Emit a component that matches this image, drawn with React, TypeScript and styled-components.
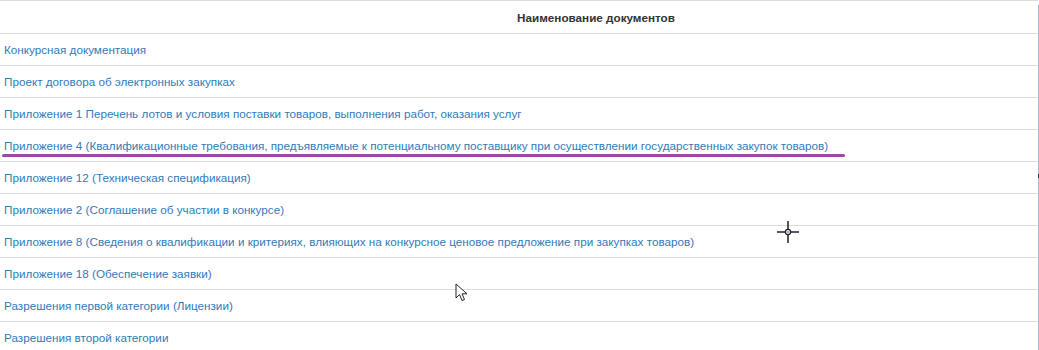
import React from "react";
import styled, { createGlobalStyle } from "styled-components";

const GlobalStyle = createGlobalStyle`
  html, body {
    margin: 0;
    padding: 0;
    background: #ffffff;
    font-family: "Liberation Sans", Arial, sans-serif;
  }
`;

const Page = styled.div`
  width: 1039px;
  height: 350px;
  display: flex;
  position: relative;
  overflow: hidden;
  background: #ffffff;
`;

const Table = styled.div`
  flex: 1;
  display: flex;
  flex-direction: column;
`;

const HeaderRow = styled.div`
  flex-shrink: 0;
  height: 32px;
  border-top: 1px solid #dddddd;
  display: flex;
  align-items: center;
  justify-content: center;
  padding-left: 154px;
  font-size: 11.7px;
  font-weight: 700;
  color: #333333;
`;

const Row = styled.div`
  flex-shrink: 0;
  height: 31px;
  border-top: 1px solid #dddddd;
  display: flex;
  align-items: center;
  padding-left: 4px;
`;

const DocLink = styled.a<{ $marked?: boolean }>`
  position: relative;
  font-size: 11.7px;
  color: #337ab7;
  text-decoration: none;
  cursor: pointer;
  white-space: nowrap;

  ${(p) =>
    p.$marked &&
    `
    &::after {
      content: "";
      position: absolute;
      left: -2px;
      right: -17px;
      bottom: -5px;
      height: 3px;
      border-radius: 2px;
      background: #9c4aa4;
    }
  `}
`;

const ScrollEdge = styled.div`
  width: 1px;
  margin-top: 5px;
  background: #aab9ca;
  position: relative;

  &::after {
    content: "";
    position: absolute;
    top: 169px;
    left: 0;
    width: 1px;
    height: 4px;
    background: #444444;
  }
`;

const Cursor = styled.svg<{ $x: number; $y: number }>`
  position: absolute;
  left: ${(p) => p.$x}px;
  top: ${(p) => p.$y}px;
  pointer-events: none;
`;

const documents = [
  "Конкурсная документация",
  "Проект договора об электронных закупках",
  "Приложение 1 Перечень лотов и условия поставки товаров, выполнения работ, оказания услуг",
  "Приложение 4 (Квалификационные требования, предъявляемые к потенциальному поставщику при осуществлении государственных закупок товаров)",
  "Приложение 12 (Техническая спецификация)",
  "Приложение 2 (Соглашение об участии в конкурсе)",
  "Приложение 8 (Сведения о квалификации и критериях, влияющих на конкурсное ценовое предложение при закупках товаров)",
  "Приложение 18 (Обеспечение заявки)",
  "Разрешения первой категории (Лицензии)",
  "Разрешения второй категории",
];

export default function App() {
  return (
    <>
      <GlobalStyle />
      <Page>
        <Table>
          <HeaderRow>Наименование документов</HeaderRow>
          {documents.map((doc, i) => (
            <Row key={i}>
              <DocLink $marked={i === 3}>{doc}</DocLink>
            </Row>
          ))}
        </Table>
        <ScrollEdge />

        <Cursor $x={776} $y={220} width="24" height="24" viewBox="0 0 24 24">
          <path d="M12 1v8M12 15v8M1 12h8M15 12h8" stroke="#1f1f2a" strokeWidth="1.5" />
          <circle cx="12" cy="12" r="2.6" fill="none" stroke="#1f1f2a" strokeWidth="1.2" />
          <circle cx="12" cy="12" r="0.7" fill="#1f1f2a" />
        </Cursor>

        <Cursor $x={455} $y={283} width="14" height="20" viewBox="0 0 14 20">
          <path
            d="M1 1 L1 15 L4.5 11.5 L7 17.5 L9.5 16.5 L7 10.8 L12 10.8 Z"
            fill="#ffffff"
            stroke="#1f1f2a"
            strokeWidth="1"
            strokeLinejoin="round"
          />
        </Cursor>
      </Page>
    </>
  );
}
